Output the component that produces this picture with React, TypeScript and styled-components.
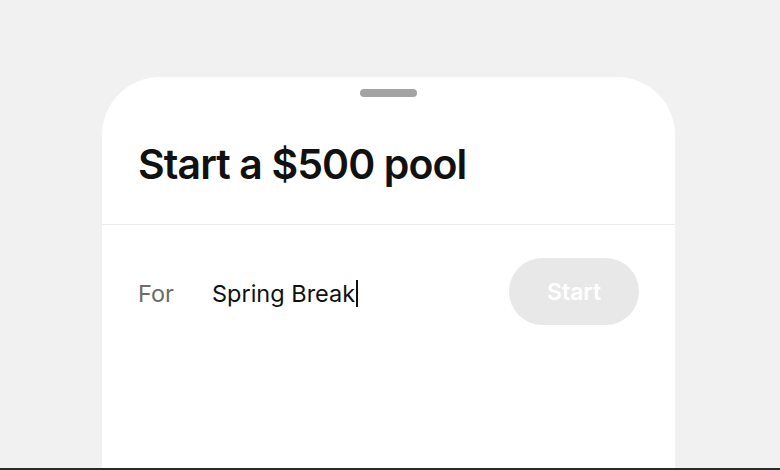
import React from "react";
import styled, { createGlobalStyle, keyframes } from "styled-components";

const GlobalStyle = createGlobalStyle`
  * { box-sizing: border-box; }
  html, body {
    margin: 0;
    padding: 0;
    background: #f1f1f1;
    font-family: Inter, "Noto Sans", sans-serif;
  }
`;

const blink = keyframes`
  0%, 49% { opacity: 1; }
  50%, 100% { opacity: 0; }
`;

const Page = styled.div`
  height: 470px;
  display: flex;
  justify-content: center;
  padding-top: 77px;
  overflow: hidden;
  border-bottom: 2px solid #2a2a2a;
`;

const Sheet = styled.div`
  width: 573px;
  margin-left: -3px;
  background: #ffffff;
  border-radius: 58px 58px 0 0;
  display: flex;
  flex-direction: column;
`;

const Header = styled.div`
  display: flex;
  flex-direction: column;
  align-items: center;
  padding: 12px 36px 0;
  height: 148px;
  border-bottom: 1px solid #ebebeb;
`;

const Handle = styled.div`
  width: 57px;
  height: 8px;
  border-radius: 4px;
  background: #a3a3a3;
`;

const Title = styled.h1`
  align-self: flex-start;
  margin: 47px 0 0;
  font-size: 41px;
  font-weight: 600;
  letter-spacing: -0.9px;
  color: #111111;
  line-height: 1;
`;

const Row = styled.div`
  display: flex;
  align-items: center;
  padding: 33px 36px 0;
`;

const Label = styled.span`
  flex: 0 0 74px;
  font-size: 23.5px;
  color: #6b6b6b;
  margin-top: 4px;
`;

const Field = styled.div`
  flex: 1;
  min-width: 0;
  display: flex;
  align-items: center;
  font-size: 23.5px;
  color: #111111;
  margin-top: 4px;
`;

const Caret = styled.span`
  width: 1.5px;
  height: 27px;
  margin-left: 1px;
  background: #111111;
  animation: ${blink} 1s step-end infinite;
`;

const StartButton = styled.button<{ $enabled: boolean }>`
  flex: 0 0 130px;
  height: 67px;
  border: none;
  border-radius: 34px;
  background: ${(p) => (p.$enabled ? "#000000" : "#e8e8e8")};
  color: #ffffff;
  font-family: inherit;
  font-size: 23px;
  font-weight: 600;
  cursor: ${(p) => (p.$enabled ? "pointer" : "default")};
`;

export default function App() {
  const name = "Spring Break";
  return (
    <>
      <GlobalStyle />
      <Page>
        <Sheet>
          <Header>
            <Handle />
            <Title>Start a $500 pool</Title>
          </Header>
          <Row>
            <Label>For</Label>
            <Field>
              {name}
              <Caret />
            </Field>
            <StartButton $enabled={false}>Start</StartButton>
          </Row>
        </Sheet>
      </Page>
    </>
  );
}
